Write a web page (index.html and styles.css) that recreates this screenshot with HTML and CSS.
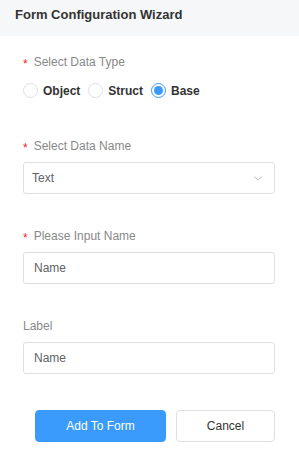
FILE: index.html
```
<!DOCTYPE html>
<html lang="en">
<head>
    <meta charset="UTF-8">
    <meta name="viewport" content="width=device-width, initial-scale=1.0">
    <title>Form Configuration Wizard</title>
    <link rel="stylesheet" href="styles.css">
</head>
<body>
    <div class="header">
        <h1>Form Configuration Wizard</h1>
    </div>
    <form class="wizard-form">
        <div class="form-item item-type">
            <label class="form-label"><span class="required">*</span>Select Data Type</label>
            <div class="radio-group">
                <label class="radio"><span class="radio-circle"></span>Object</label>
                <label class="radio"><span class="radio-circle"></span>Struct</label>
                <label class="radio checked"><span class="radio-circle"></span>Base</label>
            </div>
        </div>
        <div class="form-item">
            <label class="form-label"><span class="required">*</span>Select Data Name</label>
            <div class="select">
                <span>Text</span>
                <svg class="chevron" width="12" height="12" viewBox="0 0 12 12">
                    <path d="M2 4.5 L6 8 L10 4.5" fill="none" stroke="#c0c4cc" stroke-width="1"/>
                </svg>
            </div>
        </div>
        <div class="form-item">
            <label class="form-label"><span class="required">*</span>Please Input Name</label>
            <input class="text-input" type="text" value="Name">
        </div>
        <div class="form-item item-last">
            <label class="form-label">Label</label>
            <input class="text-input" type="text" value="Name">
        </div>
        <div class="actions">
            <button type="button" class="btn btn-primary">Add To Form</button>
            <button type="button" class="btn btn-default">Cancel</button>
        </div>
    </form>
</body>
</html>
```

FILE: styles.css
```
body {
    font-family: 'Liberation Sans', Arial, sans-serif;
    background-color: #fff;
    color: #333;
    margin: 0;
    padding: 0;
}
.header {
    height: 36px;
    box-sizing: border-box;
    padding: 5px 15px 0;
    background-color: #f6f7f9;
}
.header h1 {
    margin: 0;
    font-size: 13px;
    line-height: 20px;
    font-weight: bold;
    color: #333;
}
.wizard-form {
    padding: 16px 24px 0 23px;
}
.form-item {
    margin-bottom: 32px;
}
.form-item.item-type {
    margin-bottom: 33px;
}
.form-item.item-last {
    margin-bottom: 36px;
}
.form-label {
    display: block;
    font-size: 12px;
    line-height: 20px;
    color: #888;
    margin-bottom: 6px;
}
.required {
    color: #f21f1f;
    margin-right: 6px;
    position: relative;
    top: 2px;
}
.radio-group {
    display: flex;
    align-items: center;
    height: 25px;
}
.radio {
    display: flex;
    align-items: center;
    gap: 5px;
    margin-right: 8px;
    font-size: 12px;
    font-weight: bold;
    color: #333;
}
.radio-circle {
    width: 15px;
    height: 15px;
    box-sizing: border-box;
    border: 1px solid #dcdfe6;
    border-radius: 50%;
    background: #fff;
    display: flex;
    align-items: center;
    justify-content: center;
}
.radio.checked .radio-circle {
    border-color: #3a9bfd;
}
.radio.checked .radio-circle::after {
    content: '';
    width: 9px;
    height: 9px;
    border-radius: 50%;
    background: #3a9bfd;
}
.select,
.text-input {
    display: flex;
    align-items: center;
    width: 100%;
    height: 32px;
    box-sizing: border-box;
    border: 1px solid #dcdfe6;
    border-radius: 3px;
    font-family: inherit;
    font-size: 12px;
    color: #606266;
}
.select {
    justify-content: space-between;
    padding: 0 10px 0 8px;
}
.text-input {
    padding: 0 10px;
    outline: none;
}
.actions {
    display: flex;
    justify-content: flex-end;
    gap: 10px;
}
.btn {
    height: 32px;
    border-radius: 4px;
    font-family: inherit;
    font-size: 12px;
    cursor: pointer;
}
.btn-primary {
    width: 131px;
    background-color: #3a9bfd;
    border: 1px solid #3a9bfd;
    color: #fff;
}
.btn-default {
    width: 99px;
    background-color: #fff;
    border: 1px solid #dcdfe6;
    color: #333;
}
```
